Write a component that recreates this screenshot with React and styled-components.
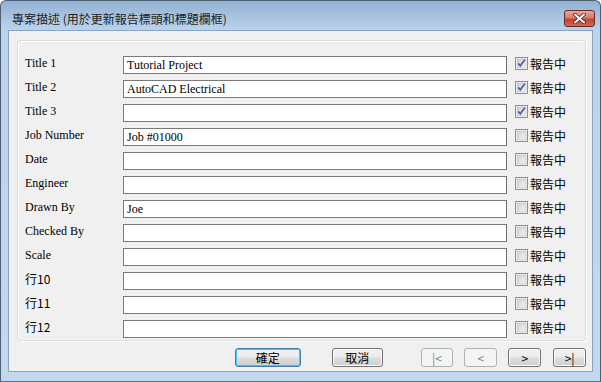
import React from 'react';
import styled, { createGlobalStyle } from 'styled-components';

const rows = [
  { label: 'Title 1', value: 'Tutorial Project', checked: true },
  { label: 'Title 2', value: 'AutoCAD Electrical', checked: true },
  { label: 'Title 3', value: '', checked: true },
  { label: 'Job Number', value: 'Job #01000', checked: false },
  { label: 'Date', value: '', checked: false },
  { label: 'Engineer', value: '', checked: false },
  { label: 'Drawn By', value: 'Joe', checked: false },
  { label: 'Checked By', value: '', checked: false },
  { label: 'Scale', value: '', checked: false },
  { label: '行10', value: '', checked: false, cjk: true },
  { label: '行11', value: '', checked: false, cjk: true },
  { label: '行12', value: '', checked: false, cjk: true },
];

const CheckBox = ({ checked }) => (
  <svg width="13" height="13" viewBox="0 0 13 13">
    <defs>
      <linearGradient id="cbg" x1="0" y1="0" x2="1" y2="1">
        <stop offset="0" stopColor="#cbcfd5" />
        <stop offset="1" stopColor="#f6f6f6" />
      </linearGradient>
    </defs>
    <rect x="0.5" y="0.5" width="12" height="12" fill="#fff" stroke="#8e8f8f" />
    <rect x="2" y="2" width="9" height="9" fill="url(#cbg)" stroke="#aeb3b9" strokeWidth="0.6" />
    {checked && (
      <path d="M3.2 6.4 L5.3 8.8 L9.8 2.8" fill="none" stroke="#4c61a3" strokeWidth="1.7" />
    )}
  </svg>
);

const Dialog = () => {
  return (
    <>
      <GlobalStyle />
      <Window>
        <TitleBar>
          <Caption>專案描述 (用於更新報告標頭和標題欄框)</Caption>
          <CloseButton>
            <svg width="15" height="11" viewBox="0 0 15 11">
              <path
                d="M3 1.5 L12 9.5 M12 1.5 L3 9.5"
                stroke="#4a1b1b"
                strokeWidth="3.6"
                strokeLinecap="round"
              />
              <path
                d="M3 1.5 L12 9.5 M12 1.5 L3 9.5"
                stroke="#ffffff"
                strokeWidth="2"
                strokeLinecap="round"
              />
            </svg>
          </CloseButton>
        </TitleBar>
        <Client>
          <Group>
            {rows.map((r) => (
              <Row key={r.label}>
                <Label $cjk={r.cjk}>{r.label}</Label>
                <Field>{r.value}</Field>
                <Check>
                  <CheckBox checked={r.checked} />
                  <CheckText>報告中</CheckText>
                </Check>
              </Row>
            ))}
          </Group>
          <ButtonBar>
            <Button $w={66} $default>確定</Button>
            <Button $w={51} $ml={31}>取消</Button>
            <Button $w={33} $ml={38} disabled>|&lt;</Button>
            <Button $w={33} $ml={11} disabled>&lt;</Button>
            <Button $w={33} $ml={11}>&gt;</Button>
            <Button $w={33} $ml={12}>&gt;|</Button>
          </ButtonBar>
        </Client>
      </Window>
    </>
  );
};

const GlobalStyle = createGlobalStyle`
  html, body {
    margin: 0;
    padding: 0;
    background: #ffffff;
  }
`;

const Window = styled.div`
  width: 601px;
  height: 382px;
  box-sizing: border-box;
  border: 1px solid #4c5f73;
  border-bottom-color: #2a8aa0;
  border-radius: 6px 6px 0 0;
  background: linear-gradient(180deg, #94b1d3 0px, #a7c1de 14px, #bcd3ec 30px, #c2d8ef 100%);
  display: flex;
  flex-direction: column;
  padding: 0 7px 9px 7px;
  overflow: hidden;
`;

const TitleBar = styled.div`
  height: 29px;
  display: flex;
  align-items: flex-start;
  justify-content: space-between;
`;

const Caption = styled.div`
  margin: 10px 0 0 4px;
  font-family: 'Noto Sans CJK TC', 'Liberation Sans', sans-serif;
  font-size: 12px;
  line-height: 16px;
  color: #1e1e1e;
`;

const CloseButton = styled.div`
  margin: 9px -2px 0 0;
  width: 31px;
  height: 17px;
  box-sizing: border-box;
  border: 1px solid #6a2a2a;
  border-radius: 3px;
  background: linear-gradient(180deg, #e5a89c 0%, #d47d6d 45%, #c2432f 55%, #cf6a52 100%);
  display: flex;
  align-items: center;
  justify-content: center;
`;

const Client = styled.div`
  flex: 1;
  background: #f0f0f0;
  border: 1px solid #8aa4bf;
  display: flex;
  flex-direction: column;
  padding: 9px 6px 0 8px;
`;

const Group = styled.div`
  border: 1px solid #d5dfe5;
  box-shadow: inset 1px 1px 0 #ffffff, 1px 1px 0 #ffffff;
  border-radius: 3px;
  padding: 15px 0 2px 7px;
  display: flex;
  flex-direction: column;
  gap: 6px;
`;

const Row = styled.div`
  display: flex;
  align-items: center;
  height: 18px;
`;

const Label = styled.div`
  width: 98px;
  font-family: ${(p) =>
    p.$cjk
      ? "'Noto Sans CJK TC', 'Liberation Sans', sans-serif"
      : "'Liberation Serif', 'Noto Sans CJK TC', serif"};
  font-size: 12px;
  line-height: 14px;
  color: #000;
  margin-top: -4px;
`;

const Field = styled.div`
  width: 384px;
  height: 18px;
  box-sizing: border-box;
  background: #ffffff;
  border: 1px solid #7a7a7a;
  border-right-color: #6e6e6e;
  padding: 1px 0 0 3px;
  font-family: 'Liberation Serif', serif;
  font-size: 12px;
  line-height: 15px;
  color: #000;
`;

const Check = styled.div`
  display: flex;
  align-items: center;
  margin: -3px 0 0 8px;
  gap: 2px;
`;

const CheckText = styled.span`
  font-family: 'Noto Sans CJK TC', 'Liberation Sans', sans-serif;
  font-size: 12px;
  line-height: 14px;
  color: #000;
`;

const ButtonBar = styled.div`
  display: flex;
  align-items: center;
  margin: 7px 0 0 218px;
`;

const Button = styled.button`
  width: ${(p) => p.$w}px;
  margin-left: ${(p) => p.$ml || 0}px;
  height: 19px;
  box-sizing: border-box;
  padding: 0;
  border: 1px solid ${(p) => (p.$default ? '#3c7fb1' : '#707070')};
  border-radius: 3px;
  background: linear-gradient(180deg, #f2f2f2 0%, #ebebeb 48%, #dddddd 52%, #cfcfcf 100%);
  box-shadow: inset 0 0 0 1px ${(p) => (p.$default ? '#48c6f2' : '#fcfcfc')};
  font-family: 'Noto Sans CJK TC', 'Liberation Sans', sans-serif;
  font-size: 12px;
  line-height: 15px;
  color: #000;

  &:disabled {
    border-color: #adb2b5;
    background: #f4f4f4;
    box-shadow: none;
    color: #838383;
  }
`;

export default Dialog;
